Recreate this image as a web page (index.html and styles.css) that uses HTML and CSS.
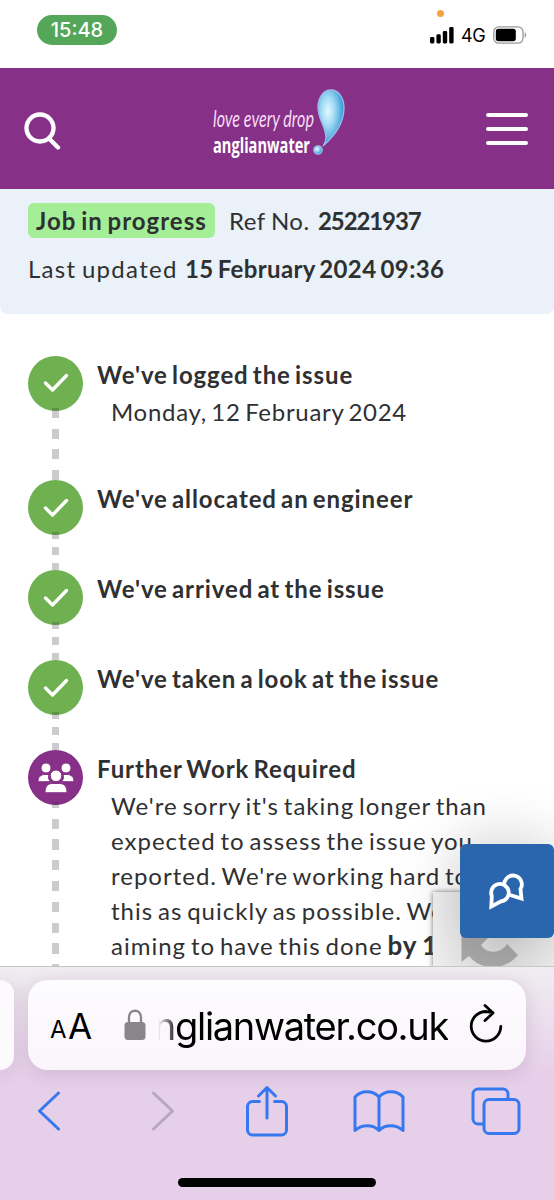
FILE: index.html
```
<!DOCTYPE html>
<html lang="en">
<head>
    <title>Track your issue - Anglian Water</title>
    <meta charset="UTF-8" />
    <link rel="stylesheet" href="styles.css">
</head>
<body>
<div class="status_bar">
    <div class="clock">15:48</div>
    <div class="status_right">
        <span class="mic_dot"></span>
        <svg class="signal" width="24" height="17" viewBox="0 0 24 17">
            <rect x="0" y="10" width="4.4" height="6.5" rx="1.4"/>
            <rect x="6.4" y="7.3" width="4.4" height="9.2" rx="1.4"/>
            <rect x="12.8" y="4" width="4.4" height="12.5" rx="1.4"/>
            <rect x="19.2" y="0" width="4.4" height="16.5" rx="1.4"/>
        </svg>
        <span class="network">4G</span>
        <svg class="battery" width="34" height="18" viewBox="0 0 34 18">
            <rect x=".8" y=".8" width="29.2" height="16.4" rx="5" fill="none" stroke="#999" stroke-width="1.3"/>
            <rect x="2.8" y="2.8" width="20" height="12.4" rx="2.6"/>
            <path d="M31.6 6.2c2 1 2 4.600 0 5.600z" fill="#999"/>
        </svg>
    </div>
</div>

<div class="site_header">
    <svg class="search" width="38" height="38" viewBox="0 0 38 38">
        <circle cx="16" cy="16" r="13.500" />
        <path d="M25.500 27l8.500 8.500"/>
    </svg>
    <svg class="logo" width="136" height="76" viewBox="0 0 136 76">
        <defs>
            <radialGradient id="drop" cx=".38" cy=".38" r=".62">
                <stop offset="0" stop-color="#e2f8ff"/>
                <stop offset=".4" stop-color="#a5dcf6"/>
                <stop offset="1" stop-color="#2c98d4"/>
            </radialGradient>
        </defs>
        <text class="love" x="2" y="40" textLength="101" lengthAdjust="spacingAndGlyphs">love every drop</text>
        <text class="anglian" x="2" y="66" textLength="97" lengthAdjust="spacingAndGlyphs">anglianwater</text>
        <path class="drop" d="M120 3c-8 0-13 8-13 17 0 13 8 20 8 31 0 4-2 6-3 8 7-6 21-19 21-38 0-10-5-18-13-18z"/>
        <circle class="drop" cx="107" cy="63" r="4.200"/>
    </svg>
    <div class="burger"><i></i><i></i><i></i></div>
</div>

<div class="page">
    <div class="summary">
        <div class="row">
            <span class="tag">Job in progress</span>
            <span class="ref">Ref No.</span>
            <strong class="ref_no">25221937</strong>
        </div>
        <div class="row">
            <span class="updated">Last updated</span>
            <strong class="updated_at">15 February 2024 09:36</strong>
        </div>
    </div>

    <div class="steps">
        <div class="step tall">
            <div class="track">
                <div class="dot"><svg width="26" height="20" viewBox="0 0 26 20"><path d="M2.500 10l7 7L23.500 2.500"/></svg></div>
                <div class="line"></div>
            </div>
            <div class="content">
                <h2>We've logged the issue</h2>
                <p class="date">Monday, 12 February 2024</p>
            </div>
        </div>
        <div class="step">
            <div class="track">
                <div class="dot"><svg width="26" height="20" viewBox="0 0 26 20"><path d="M2.500 10l7 7L23.500 2.500"/></svg></div>
                <div class="line"></div>
            </div>
            <div class="content"><h2>We've allocated an engineer</h2></div>
        </div>
        <div class="step">
            <div class="track">
                <div class="dot"><svg width="26" height="20" viewBox="0 0 26 20"><path d="M2.500 10l7 7L23.500 2.500"/></svg></div>
                <div class="line"></div>
            </div>
            <div class="content"><h2>We've arrived at the issue</h2></div>
        </div>
        <div class="step">
            <div class="track">
                <div class="dot"><svg width="26" height="20" viewBox="0 0 26 20"><path d="M2.500 10l7 7L23.500 2.500"/></svg></div>
                <div class="line"></div>
            </div>
            <div class="content"><h2>We've taken a look at the issue</h2></div>
        </div>
        <div class="step last">
            <div class="track">
                <div class="dot current">
                    <svg class="people" width="36" height="30" viewBox="0 0 36 30">
                        <circle cx="8" cy="5" r="5"/>
                        <circle cx="28" cy="5" r="5"/>
                        <path d="M0 18.500c0-5 3-7 7-7h4c-1 3-.5 5 1.500 7z"/>
                        <path d="M36 18.500c0-5-3-7-7-7h-4c1 3 .5 5-1.500 7z"/>
                        <circle cx="18" cy="12.800" r="5.800"/>
                        <path d="M7 29.500c0-6.500 3-9 7.500-9h7c4.500 0 7.500 2.500 7.500 9z"/>
                    </svg>
                </div>
                <div class="line"></div>
            </div>
            <div class="content">
                <h2>Further Work Required</h2>
                <p>We're sorry it's taking longer than<br>
                expected to assess the issue you<br>
                reported. We're working hard to<br>
                this as quickly as possible. We<br>
                aiming to have this done <strong>by 1</strong></p>
            </div>
        </div>
    </div>

    <div class="captcha">
        <svg width="60" height="60" viewBox="0 0 60 60">
            <path d="M.5 0v36L8 30c12 15 36 15 49-1L46 18c-5 9-20 11-26 1l9-9z"/>
        </svg>
    </div>
    <div class="chat">
        <svg width="36" height="36" viewBox="0 0 36 36">
            <path d="M15.500 11.500A8.800 8.800 0 1 1 31.500 14L32.500 23.500 21 20"/>
            <path d="M2.800 21A8.800 8.800 0 1 1 11.500 26.500L2.300 31.500z"/>
        </svg>
    </div>
</div>

<div class="browser_bar">
    <div class="tabs">
        <div class="tab_prev"></div>
        <div class="address">
            <span class="small_a">A</span><span class="big_a">A</span>
            <svg class="lock" width="22" height="32" viewBox="0 0 22 32">
                <path d="M5 14V8.500C5 -.5 17 -.5 17 8.500V14" fill="none" stroke="#88868b" stroke-width="2.300"/>
                <rect x="0.500" y="13" width="21" height="18" rx="3.500" fill="#88868b"/>
            </svg>
            <div class="url">nglianwater.co.uk</div>
            <svg class="reload" width="34" height="40" viewBox="0 0 34 40">
                <path d="M17 7.500A14.800 14.800 0 1 0 31.800 22.300M16 1.500l8 7.500-8 7.500M17 7.700l7 1"/>
            </svg>
        </div>
    </div>
    <div class="toolbar">
        <svg class="back" width="24" height="42" viewBox="0 0 24 42"><path d="M22.500 3L3.500 21l19 18"/></svg>
        <svg class="forward" width="24" height="42" viewBox="0 0 24 42"><path d="M2.500 3l19 18-19 18"/></svg>
        <svg class="share" width="42" height="52" viewBox="0 0 42 52">
            <path d="M13.500 16.500H6.500a5 5 0 0 0-5 5V45a5 5 0 0 0 5 5h29a5 5 0 0 0 5-5V21.500a5 5 0 0 0-5-5h-7M21 33V2.500M12.500 11L21 2.500l8.500 8.500"/>
        </svg>
        <svg class="book" width="52" height="44" viewBox="0 0 52 44">
            <path d="M26 8C20 1 8 1 2 8v33.500c7-6.500 18-6.500 24 0 6-6.500 17-6.500 24 0V8c-6-7-18-7-24 0zM26 8v33.500"/>
        </svg>
        <svg class="pages" width="50" height="48" viewBox="0 0 50 48">
            <path d="M12 37H7a5 5 0 0 1-5-5V7a5 5 0 0 1 5-5h25a5 5 0 0 1 5 5v5"/>
            <rect x="13" y="12.500" width="35" height="34" rx="5"/>
        </svg>
    </div>
    <div class="home"></div>
</div>
</body>
</html>
```

FILE: styles.css
```
body {
    margin: 0;
    width: 554px;
    height: 1200px;
    overflow: hidden;
    background: #fff;
    color: #2f3032;
    font-family: Lato, sans-serif;
    font-size: 24px;
}
svg {
    display: block;
    flex: none;
}

/* phone status bar */
.status_bar {
    display: flex;
    justify-content: space-between;
    height: 68px;
    box-sizing: border-box;
    padding: 15px 27px 0 37px;
    color: #000;
    font-family: Inter, sans-serif;
}
.clock {
    width: 80px;
    height: 30px;
    border-radius: 15px;
    background: #54a759;
    color: #fff;
    font-size: 20px;
    font-weight: 500;
    line-height: 31px;
    text-align: center;
}
.status_right {
    position: relative;
    display: flex;
    height: 40px;
    align-items: center;
}
.mic_dot {
    position: absolute;
    left: 7px;
    top: -5px;
    width: 7px;
    height: 7px;
    border-radius: 50%;
    background: #f2a444;
}
.network {
    width: 25px;
    margin: 1px 7px 0 7px;
    font-size: 18px;
    letter-spacing: -0.5px;
}

/* site header */
.site_header {
    display: flex;
    align-items: center;
    justify-content: space-between;
    height: 121px;
    box-sizing: border-box;
    padding: 0 26px 0 24px;
    background: #863088;
}
.search {
    margin-top: 4px;
    fill: none;
    stroke: #fff;
    stroke-width: 4.4;
    stroke-linecap: round;
}
.logo {
    margin: -8px 0 0 10px;
    overflow: visible;
}
.love {
    fill: #f7dcf5;
    font-size: 24px;
    font-style: italic;
}
.anglian {
    fill: #fff;
    font-family: "Open Sans", sans-serif;
    font-size: 22px;
    font-weight: bold;
}
.drop {
    fill: url(#drop);
    stroke: #9fb8ea;
    stroke-width: 1.3;
}
.burger {
    display: flex;
    flex-direction: column;
    gap: 10px;
    width: 42px;
}
.burger i {
    height: 4px;
    border-radius: 2px;
    background: #fff;
}

/* page */
.page {
    position: relative;
    height: 777px;
    overflow: hidden;
}
.summary {
    height: 125px;
    box-sizing: border-box;
    padding: 14px 28px 0;
    border-radius: 0 0 8px 8px;
    background: #eaf1f8;
}
.row {
    display: flex;
    height: 35px;
    margin-bottom: 13px;
    line-height: 35px;
    white-space: nowrap;
}
.tag {
    width: 187px;
    box-sizing: border-box;
    padding-left: 8px;
    margin-right: 14px;
    border-radius: 6px;
    background: #a4ee98;
    font-weight: bold;
    letter-spacing: 1px;
    word-spacing: -2px;
}
.ref {
    width: 89px;
    letter-spacing: 0.5px;
    word-spacing: -1px;
}
.ref_no {
    letter-spacing: -1.1px;
}
.updated {
    width: 157px;
    letter-spacing: 1.3px;
    word-spacing: -2px;
}
.updated_at {
    letter-spacing: 0.35px;
    word-spacing: -2px;
}
.steps {
    padding: 41.5px 0 0 28px;
}
.step {
    display: flex;
    height: 90px;
}
.step.tall {
    height: 124.5px;
}
.step.last {
    height: 260px;
}
.track {
    display: flex;
    flex-direction: column;
    width: 55px;
    margin-right: 14px;
}
.dot {
    display: flex;
    align-items: center;
    justify-content: center;
    flex: none;
    height: 55px;
    border-radius: 50%;
    background: #6fb150;
}
.dot path {
    fill: none;
    stroke: #fff;
    stroke-width: 3.4;
    stroke-linecap: round;
    stroke-linejoin: round;
}
.dot.current {
    background: #863088;
}
.dot .people * {
    fill: #fff;
    stroke: #863088;
    stroke-width: 1;
}
.line {
    flex: 1;
    width: 7px;
    margin: -3px auto 0;
    background: repeating-linear-gradient(rgba(40, 40, 50, .24) 0 7px, transparent 7px 15px, rgba(40, 40, 50, .24) 15px 16px);
}
.tall .line {
    background: repeating-linear-gradient(rgba(40, 40, 50, .24) 0 10px, transparent 10px 20.7px);
}
.last .line {
    background: repeating-linear-gradient(rgba(40, 40, 50, .24) 0 6px, transparent 6px 16.6px, rgba(40, 40, 50, .24) 16.6px 20.8px);
}
.content {
    white-space: nowrap;
}
h2 {
    margin: 1px 0 0;
    font-size: 24px;
    line-height: 36px;
    letter-spacing: 0.9px;
    word-spacing: -2.5px;
}
p {
    margin: 1px 0 0 14px;
    line-height: 35px;
    letter-spacing: 1px;
    word-spacing: -2.3px;
}
.date {
    letter-spacing: 0.7px;
}
p strong {
    font-size: 26px;
    line-height: 1;
}

/* floating widgets */
.captcha {
    position: absolute;
    left: 433px;
    top: 703px;
    width: 140px;
    height: 100px;
    background: linear-gradient(100deg, #f3f3f3, #ddd 50%, #f3f3f3);
    box-shadow: 0 0 5px #777;
}
.captcha svg {
    margin: 34px 0 0 28px;
    fill: #aaa;
}
.chat {
    position: absolute;
    right: 0;
    top: 655px;
    display: flex;
    align-items: center;
    justify-content: center;
    width: 94px;
    height: 94px;
    border-radius: 6px;
    background: #2a66ae;
    box-shadow: 0 0 60px rgba(0, 0, 0, .22);
}
.chat svg {
    margin-top: 3px;
    overflow: visible;
}
.chat path {
    fill: #2a66ae;
    stroke: #fff;
    stroke-width: 3.8;
    stroke-linejoin: miter;
}

/* browser controls */
.browser_bar {
    position: relative;
    height: 234px;
    box-sizing: border-box;
    border-top: 1px solid #c9c6ca;
    background: linear-gradient(#f0edf1, #e6cfe9 110px);
}
.tabs {
    display: flex;
    gap: 14px;
    padding-top: 13px;
}
.tab_prev {
    width: 14px;
    height: 90px;
    border-radius: 0 20px 20px 0;
    background: #fcfafd;
    box-shadow: 0 3px 18px rgba(90, 40, 90, .16);
}
.address {
    display: flex;
    align-items: center;
    width: 498px;
    height: 90px;
    box-sizing: border-box;
    padding-left: 22px;
    border-radius: 20px;
    background: linear-gradient(#fdfcfe, #faf5fb);
    box-shadow: 0 3px 18px rgba(90, 40, 90, .16);
    color: #000;
    font-family: Inter, sans-serif;
}
.small_a {
    width: 18px;
    margin-top: 8px;
    font-size: 24px;
}
.big_a {
    width: 56px;
    margin-top: 2px;
    font-size: 35px;
}
.url {
    margin: 2px 21px 0 6px;
    width: 296px;
    text-align: right;
    font-size: 38px;
    letter-spacing: -1.3px;
    white-space: nowrap;
    -webkit-mask-image: linear-gradient(90deg, transparent 6px, #000 26px);
    mask-image: linear-gradient(90deg, transparent 6px, #000 26px);
}
.reload {
    margin-top: -2px;
    fill: none;
    stroke: #000;
    stroke-width: 2.8;
    stroke-linecap: round;
    stroke-linejoin: round;
}
.toolbar {
    display: flex;
    align-items: center;
    height: 54px;
    padding: 14px 0 0 36px;
}
.toolbar svg {
    fill: none;
    stroke: #3578f0;
    stroke-width: 3;
    stroke-linecap: round;
    stroke-linejoin: round;
}
.toolbar .forward {
    margin-left: 91px;
    stroke: #b9a5bd;
}
.toolbar .share {
    margin-left: 71px;
}
.toolbar .book {
    margin-left: 65px;
}
.toolbar .pages {
    margin-left: 66px;
}
.home {
    width: 198px;
    height: 9px;
    margin: 40px auto 0;
    border-radius: 5px;
    background: #000;
}
```
